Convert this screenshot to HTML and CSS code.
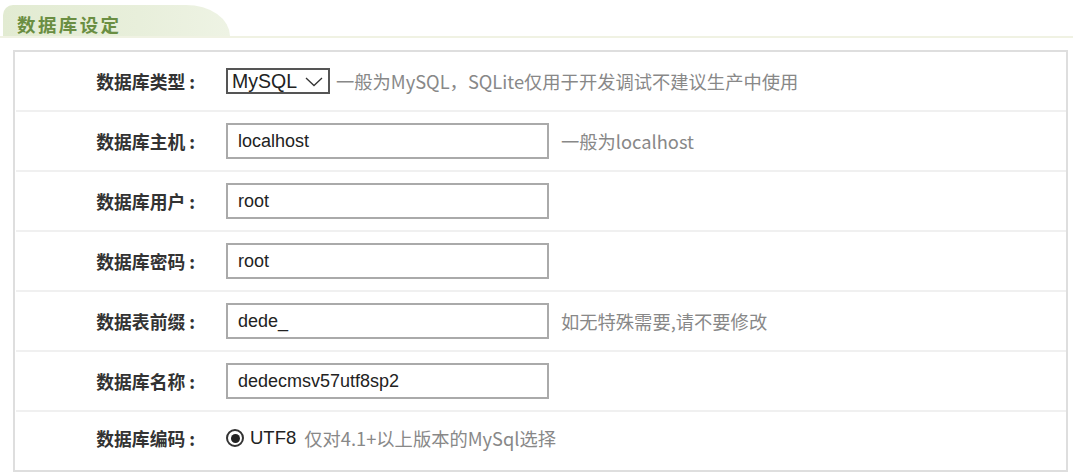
FILE: index.html
```html
<!DOCTYPE html>
<html lang="zh">
<head>
<meta charset="utf-8">
<title>数据库设定</title>
<link rel="stylesheet" href="styles.css">
</head>
<body>
<div class="page">
  <div class="tabbar">
    <div class="tab">数据库设定</div>
  </div>
  <div class="box">
    <div class="row">
      <div class="label">数据库类型<span class="colon">:</span></div>
      <div class="field">
        <div class="select">MySQL
          <svg class="chev" width="18" height="10" viewBox="0 0 18 10"><path d="M1 1 L9 8.5 L17 1" fill="none" stroke="#333" stroke-width="1.3"/></svg>
        </div>
        <span class="hint hint-near">一般为MySQL，SQLite仅用于开发调试不建议生产中使用</span>
      </div>
    </div>
    <div class="row">
      <div class="label">数据库主机<span class="colon">:</span></div>
      <div class="field">
        <input class="text" type="text" value="localhost">
        <span class="hint">一般为localhost</span>
      </div>
    </div>
    <div class="row">
      <div class="label">数据库用户<span class="colon">:</span></div>
      <div class="field"><input class="text" type="text" value="root"></div>
    </div>
    <div class="row">
      <div class="label">数据库密码<span class="colon">:</span></div>
      <div class="field"><input class="text" type="text" value="root"></div>
    </div>
    <div class="row">
      <div class="label">数据表前缀<span class="colon">:</span></div>
      <div class="field">
        <input class="text" type="text" value="dede_">
        <span class="hint">如无特殊需要,请不要修改</span>
      </div>
    </div>
    <div class="row">
      <div class="label">数据库名称<span class="colon">:</span></div>
      <div class="field"><input class="text" type="text" value="dedecmsv57utf8sp2"></div>
    </div>
    <div class="row last">
      <div class="label">数据库编码<span class="colon">:</span></div>
      <div class="field">
        <span class="radio"><span class="dot"></span></span>
        <span class="opt">UTF8</span>
        <span class="hint hint-opt">仅对4.1+以上版本的MySql选择</span>
      </div>
    </div>
  </div>
</div>
</body>
</html>
```

FILE: styles.css
```css
html, body {
  margin: 0;
  padding: 0;
  background: #fff;
}
body {
  font-family: "Noto Sans CJK SC", "Liberation Sans", sans-serif;
  color: #333;
}
.page {
  padding-top: 5px;
}
.tabbar {
  height: 31px;
  border-bottom: 2px solid #f0f2e3;
  padding-left: 3px;
}
.tab {
  width: 227px;
  height: 31px;
  box-sizing: border-box;
  padding-left: 14px;
  background: linear-gradient(to right, #e2ebd2 0%, #e8efdb 60%, #eef3e4 100%);
  border-radius: 10px 44px 0 0 / 10px 31px 0 0;
  color: #6a8e42;
  font-weight: bold;
  font-size: 18.5px;
  letter-spacing: 2.4px;
  line-height: 39px;
}
.box {
  margin: 12px 5px 0 13px;
  border: 2px solid #dedede;
}
.row {
  display: flex;
  align-items: center;
  height: 58px;
  border-bottom: 2px solid #f0f0f0;
  margin-left: 1px;
}
.row.last {
  border-bottom: none;
  padding-bottom: 6px;
  box-sizing: border-box;
}
.label {
  width: 179px;
  text-align: right;
  font-weight: bold;
  font-size: 17.8px;
  color: #333;
  flex: none;
}
.colon {
  margin-left: 4px;
}
.field {
  margin-left: 31px;
  display: flex;
  align-items: center;
}
.select {
  width: 104px;
  height: 26px;
  box-sizing: border-box;
  border: 2px solid #555;
  font-family: "Liberation Sans", sans-serif;
  font-size: 19.5px;
  line-height: 22px;
  padding-left: 4px;
  color: #222;
  position: relative;
}
.chev {
  position: absolute;
  right: 5px;
  top: 7px;
}
.text {
  width: 323px;
  height: 36px;
  box-sizing: border-box;
  border: 2px solid #aaa;
  padding: 0 10px;
  font-family: "Liberation Sans", sans-serif;
  font-size: 18px;
  color: #222;
  outline: none;
  margin: 0;
}
.hint {
  color: #888;
  font-size: 18.3px;
  margin-left: 12px;
}
.hint-near {
  margin-left: 6px;
}
.radio {
  width: 18px;
  height: 18px;
  box-sizing: border-box;
  border: 2px solid #333;
  border-radius: 50%;
  display: flex;
  align-items: center;
  justify-content: center;
}
.dot {
  width: 9px;
  height: 9px;
  border-radius: 50%;
  background: #222;
}
.opt {
  margin-left: 6px;
  font-size: 18.5px;
  font-family: "Liberation Sans", sans-serif;
  color: #222;
}
.hint-opt {
  margin-left: 8px;
}
```
